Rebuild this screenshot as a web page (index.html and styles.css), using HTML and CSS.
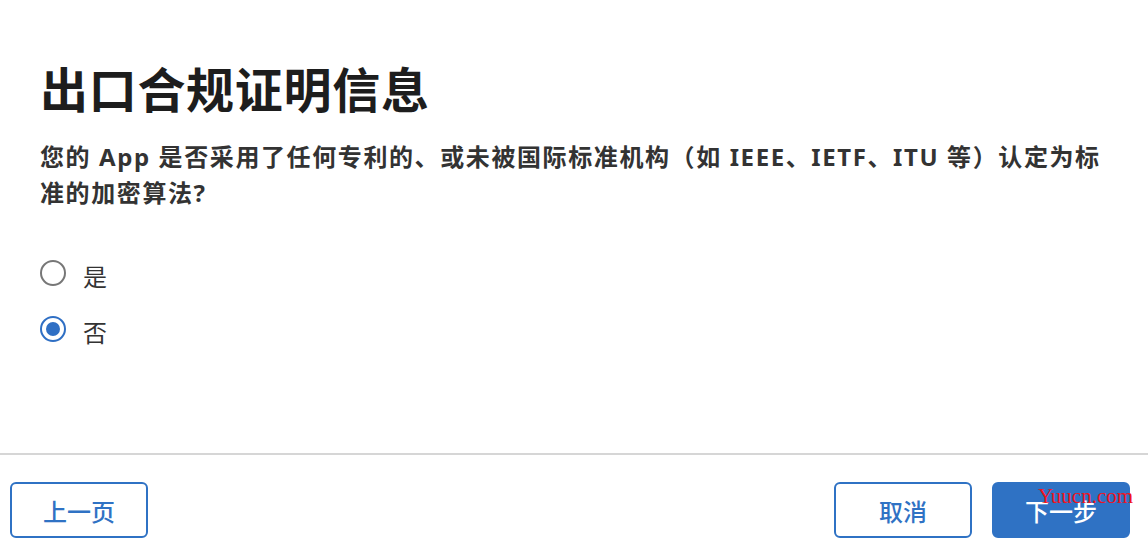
FILE: index.html
```html
<!DOCTYPE html>
<html lang="zh-CN">
<head>
  <meta charset="UTF-8">
  <title>出口合规证明信息</title>
  <link rel="stylesheet" href="styles.css">
</head>
<body>
  <div class="page">
    <div class="content">
      <h1 class="title">出口合规证明信息</h1>
      <p class="question">您的 App 是否采用了任何专利的、或未被国际标准机构（如 IEEE、IETF、ITU 等）认定为标准的加密算法?</p>

      <div class="options">
        <label class="option">
          <span class="radio"></span>
          <span class="option-text">是</span>
        </label>
        <label class="option">
          <span class="radio checked"></span>
          <span class="option-text">否</span>
        </label>
      </div>
    </div>

    <div class="footer">
      <button class="btn">上一页</button>
      <div class="footer-right">
        <button class="btn">取消</button>
        <button class="btn primary">下一步</button>
      </div>
    </div>
  </div>
  <span class="watermark">Yuucn.com</span>
</body>
</html>
```

FILE: styles.css
```css
body {
  margin: 0;
  font-family: "Noto Sans", "Noto Sans CJK SC", sans-serif;
  color: #333;
  background: #fff;
}

.page {
  height: 552px;
  display: flex;
  flex-direction: column;
}

.content {
  flex: 1;
  padding: 61px 40px 0 40px;
}

.title {
  margin: 0;
  font-size: 48px;
  line-height: 58px;
  font-weight: 700;
  letter-spacing: 0.7px;
  color: #1d1d1d;
}

.question {
  margin: 20px 0 0 0;
  font-size: 24px;
  line-height: 36px;
  font-weight: 700;
  letter-spacing: 1.6px;
  color: #333;
}

.options {
  margin-top: 46px;
  display: flex;
  flex-direction: column;
  gap: 16px;
}

.option {
  display: flex;
  align-items: center;
  height: 40px;
  gap: 17px;
}

.radio {
  width: 26px;
  height: 26px;
  box-sizing: border-box;
  border: 2px solid #777;
  border-radius: 50%;
  display: flex;
  align-items: center;
  justify-content: center;
  margin-top: -8px;
}

.radio.checked {
  border-color: #2f6fc4;
}

.radio.checked::after {
  content: "";
  width: 14px;
  height: 14px;
  border-radius: 50%;
  background: #2f6fc4;
}

.option-text {
  font-size: 24px;
  color: #333;
  line-height: 40px;
}

.footer {
  border-top: 2px solid #d6d6d6;
  padding: 27px 18px 0 10px;
  height: 99px;
  box-sizing: border-box;
  display: flex;
  justify-content: space-between;
  align-items: flex-start;
}

.footer-right {
  display: flex;
  gap: 20px;
}

.btn {
  width: 138px;
  height: 56px;
  border: 2px solid #2f72c4;
  border-radius: 6px;
  background: #fff;
  color: #2f72c4;
  font-family: "Noto Sans CJK SC", sans-serif;
  font-size: 24px;
  font-weight: 500;
  cursor: pointer;
}

.btn.primary {
  background: #2f72c4;
  color: #fff;
}

.watermark {
  position: absolute;
  left: 1038px;
  top: 484px;
  font-family: "Liberation Serif", serif;
  font-size: 21px;
  color: #f0141e;
}
```
